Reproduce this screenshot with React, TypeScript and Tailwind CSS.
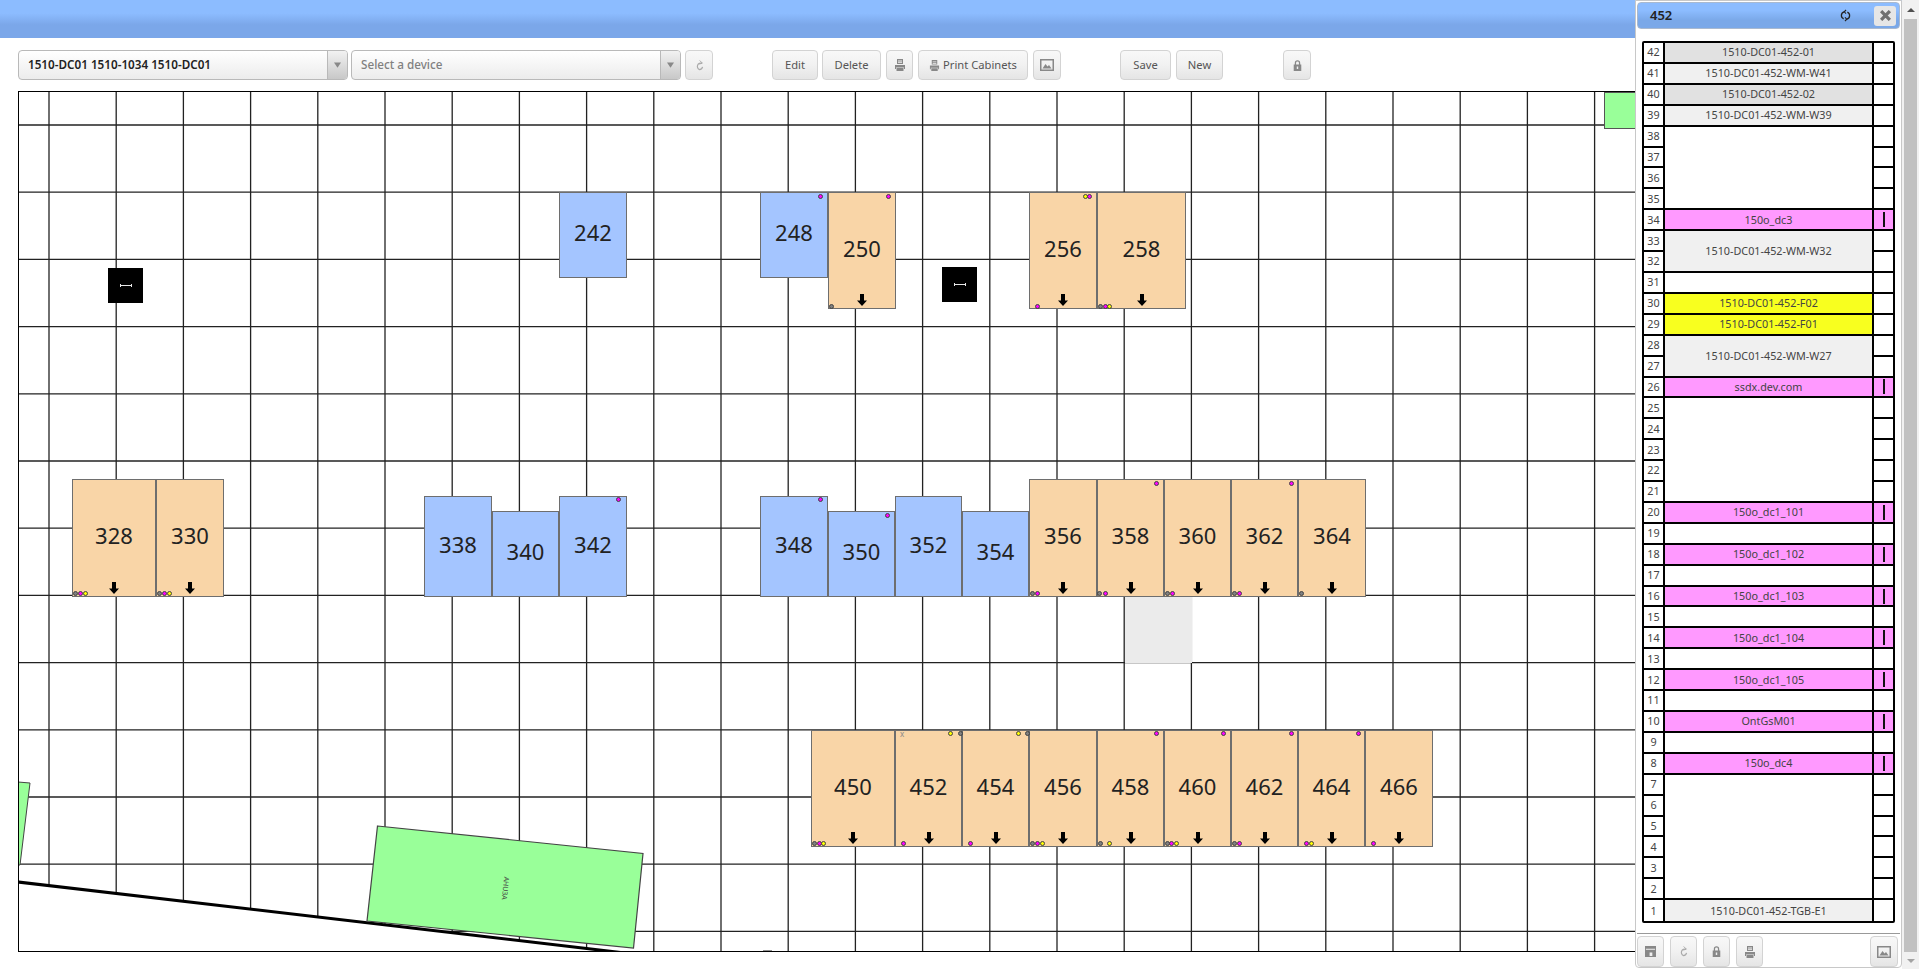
import React from 'react';

const FONT = "font-['Noto_Sans','DejaVu_Sans',sans-serif]";
const ROW = 20.93;

// canvas nodes use page coordinates, minus the canvas origin
const OX = 19;
const OY = 92;

type Dot = [number, number, 'm' | 'y' | 'g'];
type Cab = { label: string; x1: number; y1: number; x2: number; y2: number; orange?: boolean };

const CABS: Cab[] = [
  { label: '242', x1: 559, y1: 192, x2: 627, y2: 278 },
  { label: '248', x1: 760, y1: 192, x2: 828, y2: 278 },
  { label: '250', x1: 828, y1: 192, x2: 896, y2: 309, orange: true },
  { label: '256', x1: 1029, y1: 192, x2: 1097, y2: 309, orange: true },
  { label: '258', x1: 1097, y1: 192, x2: 1186, y2: 309, orange: true },
  { label: '328', x1: 72, y1: 479, x2: 156, y2: 597, orange: true },
  { label: '330', x1: 156, y1: 479, x2: 224, y2: 597, orange: true },
  { label: '338', x1: 424, y1: 496, x2: 492, y2: 597 },
  { label: '340', x1: 492, y1: 511, x2: 559, y2: 597 },
  { label: '342', x1: 559, y1: 496, x2: 627, y2: 597 },
  { label: '348', x1: 760, y1: 496, x2: 828, y2: 597 },
  { label: '350', x1: 828, y1: 511, x2: 895, y2: 597 },
  { label: '352', x1: 895, y1: 496, x2: 962, y2: 597 },
  { label: '354', x1: 962, y1: 511, x2: 1029, y2: 597 },
  { label: '356', x1: 1029, y1: 479, x2: 1097, y2: 597, orange: true },
  { label: '358', x1: 1097, y1: 479, x2: 1164, y2: 597, orange: true },
  { label: '360', x1: 1164, y1: 479, x2: 1231, y2: 597, orange: true },
  { label: '362', x1: 1231, y1: 479, x2: 1298, y2: 597, orange: true },
  { label: '364', x1: 1298, y1: 479, x2: 1366, y2: 597, orange: true },
  { label: '450', x1: 811, y1: 730, x2: 895, y2: 847, orange: true },
  { label: '452', x1: 895, y1: 730, x2: 962, y2: 847, orange: true },
  { label: '454', x1: 962, y1: 730, x2: 1029, y2: 847, orange: true },
  { label: '456', x1: 1029, y1: 730, x2: 1097, y2: 847, orange: true },
  { label: '458', x1: 1097, y1: 730, x2: 1164, y2: 847, orange: true },
  { label: '460', x1: 1164, y1: 730, x2: 1231, y2: 847, orange: true },
  { label: '462', x1: 1231, y1: 730, x2: 1298, y2: 847, orange: true },
  { label: '464', x1: 1298, y1: 730, x2: 1365, y2: 847, orange: true },
  { label: '466', x1: 1365, y1: 730, x2: 1433, y2: 847, orange: true },
];

const DOTS: Dot[] = [
  [820, 196, 'm'], [888, 196, 'm'], [831, 306, 'g'], [1085, 196, 'y'], [1089, 196, 'm'], [1037, 306, 'm'],
  [1100, 306, 'g'], [1105, 306, 'm'], [1109, 306, 'y'],
  [75, 593, 'g'], [80, 593, 'm'], [85, 593, 'y'], [159, 593, 'g'], [164, 593, 'm'], [169, 593, 'y'],
  [618, 499, 'm'], [820, 499, 'm'], [887, 515, 'm'],
  [1156, 483, 'm'], [1291, 483, 'm'],
  [1032, 593, 'g'], [1037, 593, 'm'], [1099, 593, 'g'], [1105, 593, 'm'], [1167, 593, 'g'], [1172, 593, 'm'],
  [1234, 593, 'g'], [1239, 593, 'm'], [1301, 593, 'g'],
  [950, 733, 'y'], [960, 733, 'g'], [1018, 733, 'y'], [1027, 733, 'g'],
  [1156, 733, 'm'], [1223, 733, 'm'], [1291, 733, 'm'], [1358, 733, 'm'],
  [814, 843, 'g'], [819, 843, 'm'], [823, 843, 'y'], [903, 843, 'm'], [970, 843, 'm'],
  [1032, 843, 'g'], [1037, 843, 'm'], [1042, 843, 'y'], [1100, 843, 'g'], [1109, 843, 'y'],
  [1167, 843, 'g'], [1171, 843, 'm'], [1176, 843, 'y'], [1234, 843, 'g'], [1239, 843, 'm'],
  [1306, 843, 'm'], [1311, 843, 'y'], [1373, 843, 'm'],
];

type Seg = { label?: string; span: number; kind?: 'dark' | 'light' | 'pink' | 'yellow' };

const SEGS: Seg[] = [
  { label: '1510-DC01-452-01', span: 1, kind: 'dark' },
  { label: '1510-DC01-452-WM-W41', span: 1, kind: 'light' },
  { label: '1510-DC01-452-02', span: 1, kind: 'dark' },
  { label: '1510-DC01-452-WM-W39', span: 1, kind: 'light' },
  { span: 4 },
  { label: '150o_dc3', span: 1, kind: 'pink' },
  { label: '1510-DC01-452-WM-W32', span: 2, kind: 'light' },
  { span: 1 },
  { label: '1510-DC01-452-F02', span: 1, kind: 'yellow' },
  { label: '1510-DC01-452-F01', span: 1, kind: 'yellow' },
  { label: '1510-DC01-452-WM-W27', span: 2, kind: 'light' },
  { label: 'ssdx.dev.com', span: 1, kind: 'pink' },
  { span: 5 },
  { label: '150o_dc1_101', span: 1, kind: 'pink' },
  { span: 1 },
  { label: '150o_dc1_102', span: 1, kind: 'pink' },
  { span: 1 },
  { label: '150o_dc1_103', span: 1, kind: 'pink' },
  { span: 1 },
  { label: '150o_dc1_104', span: 1, kind: 'pink' },
  { span: 1 },
  { label: '150o_dc1_105', span: 1, kind: 'pink' },
  { span: 1 },
  { label: 'OntGsM01', span: 1, kind: 'pink' },
  { span: 1 },
  { label: '150o_dc4', span: 1, kind: 'pink' },
  { span: 6 },
  { label: '1510-DC01-452-TGB-E1', span: 1, kind: 'light' },
];

const PINK_UNITS = [34, 26, 20, 18, 16, 14, 12, 10, 8];
const UNITS = Array.from({ length: 42 }, (_, i) => 42 - i);
const V_LINES = Array.from({ length: 24 }, (_, i) => 49 + 67.2 * i);
const H_LINES = Array.from({ length: 13 }, (_, i) => 125 + 67.2 * i);

const segClass = (kind?: Seg['kind']) => {
  if (kind === 'dark') return 'bg-[#e1e1e1]';
  if (kind === 'light') return 'bg-[#f0f0f0]';
  if (kind === 'pink') return 'bg-[#ff99ff]';
  if (kind === 'yellow') return 'bg-[#f8ff1f]';
  return 'bg-white';
};

const dotClass = (c: Dot[2]) => {
  if (c === 'm') return 'bg-[#ff00ff]';
  if (c === 'y') return 'bg-[#ffff00]';
  return 'bg-[#808080]';
};

const Printer = ({ className = '' }: { className?: string }) => (
  <svg viewBox="0 0 12 12" className={className} fill="currentColor">
    <path d="M3 0h6v5H3zM4 1.5v1h4v-1zM4 3.2v.8h4v-.8z" fillRule="evenodd" />
    <path d="M1 6h10v4h-1V8.5H2V10H1zM2.5 9h7v3h-7z" />
  </svg>
);

const ImageIcon = ({ className = '' }: { className?: string }) => (
  <svg viewBox="0 0 14 12" className={className} fill="currentColor">
    <path d="M0 0h14v12H0zM1.5 1.5v9h11v-9z" fillRule="evenodd" />
    <path d="M2.5 9.5l3-4.5 2 2.5 1.5-1.5 2.5 3.5z" />
  </svg>
);

const Lock = ({ className = '' }: { className?: string }) => (
  <svg viewBox="0 0 10 12" className={className} fill="currentColor">
    <path d="M2 5V3.2a3 3 0 016 0V5h1.2v7H.8V5zm1.4 0h3.2V3.2a1.6 1.6 0 00-3.2 0zM4.2 7v3h1.6V7z" fillRule="evenodd" />
  </svg>
);

const Refresh = ({ className = '' }: { className?: string }) => (
  <svg viewBox="0 0 10 14" className={className} fill="none" stroke="currentColor" strokeWidth="1.3">
    <path d="M7.8 4.6A3.7 3.7 0 105 11.6a3.7 3.7 0 003.4-3" />
    <path d="M5.2 1.4l3 3-3.4 1" strokeWidth="1.1" />
  </svg>
);

const Save = ({ className = '' }: { className?: string }) => (
  <svg viewBox="0 0 12 12" className={className} fill="currentColor">
    <path d="M0 0h12v12H0zM1 3v1.2h10V3zM5 7v4h3V7z" fillRule="evenodd" />
  </svg>
);

const Button = ({ children, className = '' }: { children: React.ReactNode; className?: string }) => (
  <div
    className={`flex items-center justify-center gap-[3px] h-[30px] rounded-[4px] border border-[#d3d3d3] bg-gradient-to-b from-[#f8f8f8] via-[#f1f1f1] to-[#e5e5e5] text-[11.2px] text-[#555] ${className}`}
  >
    {children}
  </div>
);

const Combo = ({ text, muted, width }: { text: string; muted?: boolean; width: string }) => (
  <div className={`flex h-[30px] rounded-[4px] border border-[#b9b9b9] bg-gradient-to-b from-white to-[#ececec] overflow-hidden ${width}`}>
    <div className={`flex-1 pl-[9px] flex items-center text-[11.7px] ${muted ? 'text-[#808080] font-medium' : 'text-[#222] font-semibold'}`}>
      {text}
    </div>
    <div className="w-[20px] flex items-center justify-center border-l border-[#b9b9b9] bg-gradient-to-b from-[#f2f2f2] to-[#c8c8c8]">
      <svg viewBox="0 0 8 6" className="w-[7px] h-[6px] text-[#888]" fill="currentColor">
        <path d="M0 0h8L4 6z" />
      </svg>
    </div>
  </div>
);

const Toolbar = () => (
  <div className="flex items-start h-[53px] pt-[12px] pl-[18px]">
    <Combo text="1510-DC01 1510-1034 1510-DC01" width="w-[330px]" />
    <div className="w-[3px]" />
    <Combo text="Select a device" muted width="w-[330px]" />
    <Button className="w-[28px] ml-[4px] text-[#aaa]"><Refresh className="w-[9px] h-[13px]" /></Button>
    <Button className="w-[46px] ml-[59px]">Edit</Button>
    <Button className="w-[59px] ml-[4px]">Delete</Button>
    <Button className="w-[27px] ml-[5px] text-[#888]"><Printer className="w-[12px] h-[12px]" /></Button>
    <Button className="w-[110px] ml-[5px]"><Printer className="w-[11px] h-[11px] text-[#888]" />Print Cabinets</Button>
    <Button className="w-[28px] ml-[5px] text-[#888]"><ImageIcon className="w-[14px] h-[12px]" /></Button>
    <Button className="w-[51px] ml-[59px]">Save</Button>
    <Button className="w-[47px] ml-[5px]">New</Button>
    <Button className="w-[28px] ml-[60px] text-[#888]"><Lock className="w-[9px] h-[11px]" /></Button>
  </div>
);

const Cabinet = ({ cab }: { cab: Cab }) => (
  <div
    className={`absolute flex items-center justify-center pb-[5px] border border-[#6e6e6e] text-[22px] text-[#222] ${cab.orange ? 'bg-[#f9d5a7]' : 'bg-[#a4c5ff]'}`}
    style={{ left: cab.x1 - OX, top: cab.y1 - OY, width: cab.x2 - cab.x1, height: cab.y2 - cab.y1 }}
  >
    {cab.label}
    {cab.orange && (
      <svg viewBox="0 0 10 12" className="absolute bottom-[2px] left-1/2 -ml-[5px] w-[10px] h-[12px]" fill="black">
        <path d="M3 0h4v6.5h3L5 12 0 6.5h3z" />
      </svg>
    )}
  </div>
);

const FloorCanvas = () => (
  <div className="relative ml-[18px] w-[1640px] h-[861px] border border-black overflow-hidden bg-white">
    <svg viewBox={`${OX} ${OY} 1640 861`} className="absolute left-0 top-0 w-[1640px] h-[861px]">
      {V_LINES.map((x) => (
        <line key={x} x1={x} x2={x} y1={OY} y2={960} stroke="#222" strokeWidth="1.3" />
      ))}
      {H_LINES.map((y) => (
        <line key={y} x1={OX} x2={1660} y1={y} y2={y} stroke="#222" strokeWidth="1.3" />
      ))}
      <polygon points="18,882 625,953 18,953" fill="white" />
      <line x1="18" y1="882" x2="625" y2="953" stroke="black" strokeWidth="3" />
      <rect x="763" y="950.5" width="9" height="2" fill="#222" />
      <polygon points="18,782 30,783 20,865 18,865" fill="#99ff99" stroke="#444" strokeWidth="1" />
      <polygon points="377.5,826 643,853.5 633.5,948 367,921" fill="#99ff99" stroke="#444" strokeWidth="1.2" />
      <text x="503" y="888" fontSize="7" fill="#444" textAnchor="middle" fontFamily="Noto Sans" transform="rotate(96 503 888)">AHU3A</text>
    </svg>

    <div className="absolute left-[1585px] top-0 w-[60px] h-[37px] bg-[#99ff99] border border-[#555]" />
    <div className="absolute left-[1106px] top-[504px] w-[67px] h-[67px] bg-[#ebebeb]" />

    {[[108, 268], [942, 267]].map(([x, y]) => (
      <div
        key={x}
        className="absolute w-[35px] h-[35px] bg-black flex items-center justify-center"
        style={{ left: x - OX, top: y - OY }}
      >
        <svg viewBox="0 0 12 3" className="w-[12px] h-[3px]" stroke="#e8e8e8" strokeWidth="1">
          <path d="M.5 0v3M11.5 0v3M.5 1.5h11" />
        </svg>
      </div>
    ))}

    {CABS.map((cab) => (
      <Cabinet key={cab.label} cab={cab} />
    ))}

    {DOTS.map(([x, y, c], i) => (
      <div
        key={i}
        className={`absolute w-[5px] h-[5px] rounded-full border border-[#444] ${dotClass(c)}`}
        style={{ left: x - 2.5 - OX, top: y - 2.5 - OY }}
      />
    ))}
    <div className="absolute left-[881px] top-[638px] text-[8px] leading-[8px] text-[#888]">x</div>
  </div>
);

const Rack = () => (
  <div className="flex mx-[6px] mt-[12px] w-[253px] h-[882px] border-2 border-black rounded-[2px] text-[10.8px] text-[#444]">
    <div className="w-[21px] shrink-0 border-r-2 border-black flex flex-col">
      {UNITS.map((n) => (
        <div
          key={n}
          className="flex items-center justify-center border-b-2 border-black last:border-b-0 bg-white"
          style={{ height: ROW }}
        >
          {n}
        </div>
      ))}
    </div>
    <div className="flex-1 flex flex-col">
      {SEGS.map((s, i) => (
        <div
          key={i}
          className={`flex items-center justify-center border-b-2 border-black last:border-b-0 ${segClass(s.kind)}`}
          style={{ height: ROW * s.span }}
        >
          {s.label}
        </div>
      ))}
    </div>
    <div className="w-[21px] shrink-0 border-l-2 border-black flex flex-col">
      {UNITS.map((n) => (
        <div
          key={n}
          className={`flex items-center justify-center border-b-2 border-black last:border-b-0 ${PINK_UNITS.includes(n) ? 'bg-[#ff99ff]' : 'bg-white'}`}
          style={{ height: ROW }}
        >
          {PINK_UNITS.includes(n) && <div className="w-[2px] h-[15px] bg-[#111]" />}
        </div>
      ))}
    </div>
  </div>
);

const SidePanel = () => (
  <div className="absolute right-[17px] top-0 w-[267px] h-[968px] flex flex-col bg-white border border-[#c8c8c8] rounded-b-[4px]">
    <div className="flex items-center h-[27px] mx-[1px] mt-[1px] pl-[12px] pr-[3px] rounded-[4px] border border-[#a9b9cf] bg-[linear-gradient(180deg,#8cbcff_30%,#7aa8e8_70%)]">
      <span className="flex-1 text-[13px] font-semibold text-[#222]">452</span>
      <svg viewBox="0 0 12 14" className="w-[11px] h-[13px] mr-[23px]" fill="none" stroke="#222" strokeWidth="1.4">
        <path d="M4.6 3A4 4 0 004 10.6M7.4 11A4 4 0 008 3.4" />
        <path d="M6.6 1L4.6 3l2 2M5.4 9l2 2-2 2" strokeWidth="1.2" />
      </svg>
      <div className="w-[22px] h-[20px] rounded-[3px] bg-[#e6e6e6] flex items-center justify-center">
        <svg viewBox="0 0 10 10" className="w-[11px] h-[11px]" stroke="#707070" strokeWidth="3">
          <path d="M1 1l8 8M9 1l-8 8" />
        </svg>
      </div>
    </div>
    <Rack />
    <div className="flex mx-[1px] mt-[10px] pt-[2px] border-t border-[#999] gap-[6px]">
      <Button className="w-[27px] h-[31px] text-[#888]"><Save className="w-[11px] h-[11px]" /></Button>
      <Button className="w-[27px] h-[31px] text-[#aaa]"><Refresh className="w-[9px] h-[13px]" /></Button>
      <Button className="w-[27px] h-[31px] text-[#888]"><Lock className="w-[9px] h-[11px]" /></Button>
      <Button className="w-[27px] h-[31px] text-[#888]"><Printer className="w-[12px] h-[12px]" /></Button>
      <Button className="w-[28px] h-[31px] ml-auto mr-[2px] text-[#888]"><ImageIcon className="w-[14px] h-[12px]" /></Button>
    </div>
  </div>
);

const Scrollbar = () => (
  <div className="absolute right-0 top-0 w-[17px] h-full bg-[#f1f1f1] flex flex-col items-center">
    <div className="h-[19px] flex items-center">
      <div className="w-0 h-0 border-x-[4px] border-x-transparent border-b-[4px] border-b-[#505050]" />
    </div>
    <div className="w-[13px] flex-1 bg-[#c1c1c1]" />
    <div className="h-[17px] flex items-center">
      <div className="w-0 h-0 border-x-[4px] border-x-transparent border-t-[4px] border-t-[#a3a3a3]" />
    </div>
  </div>
);

export default function App() {
  return (
    <div className={`relative w-full h-[969px] overflow-hidden bg-white ${FONT}`}>
      <div className="h-[38px] bg-[linear-gradient(180deg,#8cbcff_35%,#7ba7e9_65%)]" />
      <Toolbar />
      <FloorCanvas />
      <SidePanel />
      <Scrollbar />
    </div>
  );
}
